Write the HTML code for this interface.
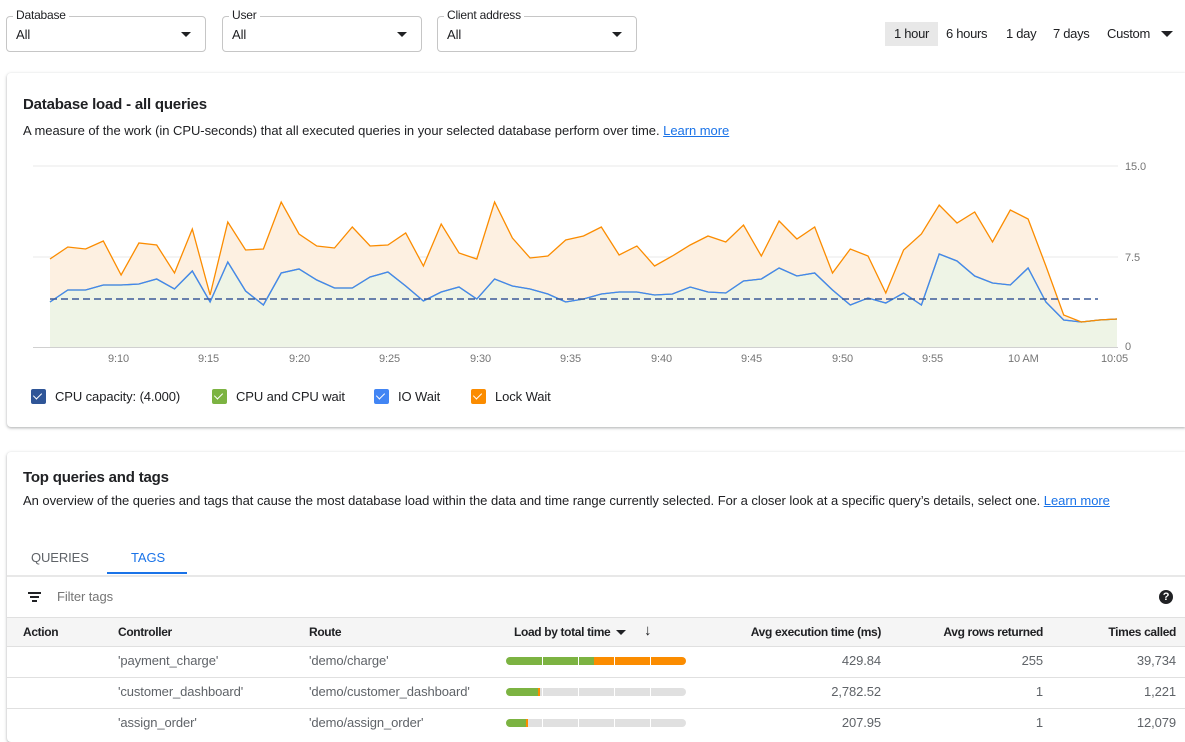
<!DOCTYPE html>
<html><head><meta charset="utf-8"><style>
*{box-sizing:border-box;margin:0;padding:0}
body{width:1185px;height:732px;overflow:hidden;background:#fff;font-family:"Liberation Sans",Arial,sans-serif;color:#202124;position:relative;letter-spacing:-0.1px}
.abs{position:absolute}
.sel{position:absolute;top:16px;height:36px;width:200px;border:1px solid #c6c6c6;border-radius:4px}
.sel .lb{position:absolute;top:-9px;left:6px;background:#fff;padding:0 3px;font-size:12px;color:#202124;letter-spacing:-0.2px}
.sel .v{position:absolute;left:9px;top:10px;font-size:13px}
.sel .ar{position:absolute;right:14px;top:15px;width:0;height:0;border-left:5px solid transparent;border-right:5px solid transparent;border-top:5px solid #202124}
.tb{position:absolute;top:22px;height:24px;font-size:13px;line-height:24px;color:#202124;letter-spacing:-0.3px}
.card{position:absolute;left:7px;right:0;background:#fff;box-shadow:0 1px 2px rgba(60,64,67,.3),0 1px 3px 1px rgba(60,64,67,.1);border-radius:4px 0 0 4px}
h2{font-size:15px;font-weight:bold;position:absolute;letter-spacing:-0.2px}
.p{font-size:13px;position:absolute;white-space:nowrap;letter-spacing:-0.04px}
a{color:#1a73e8;text-decoration:underline}
.lg{position:absolute;top:389px;font-size:13px;display:flex;align-items:center}
.lg i{display:inline-block;width:15px;height:15px;border-radius:2px;margin-right:9px;position:relative}
.lg i:after{content:"";position:absolute;left:4px;top:2px;width:4px;height:7px;border:solid #fff;border-width:0 1.5px 1.5px 0;transform:rotate(45deg)}
.ax{position:absolute;top:353px;font-size:11px;color:#757575}
.th{position:absolute;font-size:12px;font-weight:bold;color:#202124;top:625px;letter-spacing:-0.35px}
.td{position:absolute;font-size:13px;color:#5f6368}
.bar{position:absolute;left:506px;width:180px;height:8px;border-radius:4px;overflow:hidden;background:#e0e0e0}
.bar span{position:absolute;top:0;bottom:0;width:1px;background:#fff}
.hr{position:absolute;left:7px;right:0;height:1px;background:#e0e0e0}
</style></head><body>
<div class="sel" style="left:6px"><span class="lb">Database</span><span class="v">All</span><span class="ar"></span></div>
<div class="sel" style="left:222px"><span class="lb">User</span><span class="v">All</span><span class="ar"></span></div>
<div class="sel" style="left:437px"><span class="lb">Client address</span><span class="v">All</span><span class="ar"></span></div>
<div class="tb" style="left:885px;width:53px;background:#e8e8e8;text-align:center">1 hour</div>
<div class="tb" style="left:946px">6 hours</div>
<div class="tb" style="left:1006px">1 day</div>
<div class="tb" style="left:1053px">7 days</div>
<div class="tb" style="left:1107px">Custom</div>
<div class="abs" style="left:1161px;top:31px;border-left:6px solid transparent;border-right:6px solid transparent;border-top:6px solid #202124"></div>

<div class="card" style="top:73px;height:354px"></div>
<h2 style="left:23px;top:96px">Database load - all queries</h2>
<div class="p" style="left:23px;top:123px">A measure of the work (in CPU-seconds) that all executed queries in your selected database perform over time. <a>Learn more</a></div>
<svg class="abs" style="left:0;top:0" width="1185" height="380" id="ch">
<line x1="33" y1="166" x2="1118" y2="166" stroke="#e8e8e8"/>
<line x1="33" y1="257" x2="1118" y2="257" stroke="#e8e8e8"/>
<g id="g"></g>
<line x1="33" y1="347.5" x2="1118" y2="347.5" stroke="#d0d0d0"/>
<line x1="50" y1="299" x2="1098" y2="299" stroke="#3c5a99" stroke-width="1.5" stroke-dasharray="7,4"/>
<text x="1125" y="170" font-size="11" fill="#757575" font-family="Liberation Sans">15.0</text>
<text x="1125" y="261" font-size="11" fill="#757575" font-family="Liberation Sans">7.5</text>
<text x="1125" y="350" font-size="11" fill="#757575" font-family="Liberation Sans">0</text>
</svg>
<script>
var o=[259,247,249,241,275,243,245,273,229,295,222,250,249,202,234,246,248,227,246,245,233,266,224,253,259,202,238,258,256,240,236,227,255,246,266,256,245,236,242,225,256,221,239,227,273,249,256,293,250,234,205,223,212,242,210,219,266,315,322,320,319];
var b=[302,290,290,285,285,284,279,289,271,302,262,291,305,273,269,280,288,288,277,272,286,301,292,287,299,279,286,289,294,302,299,294,292,292,295,294,287,292,293,281,279,268,276,273,290,305,298,303,293,305,254,261,276,283,285,268,302,320,322,320,319];
function X(i){return (50+i*1067/60).toFixed(1)}
var po=o.map(function(y,i){return X(i)+","+y}),pb=b.map(function(y,i){return X(i)+","+y});
var rb=pb.slice().reverse();
var h='<polygon fill="#fdf0e1" points="'+po.join(" ")+" "+rb.join(" ")+'"/>';
h+='<polygon fill="#eef4e6" points="'+pb.join(" ")+" 1117,347 50,347"+'"/>';
h+='<polyline fill="none" stroke="#7cb342" stroke-width="1.3" points="'+pb.join(" ")+'"/>';
h+='<polyline fill="none" stroke="#4285f4" stroke-width="1.3" points="'+pb.join(" ")+'"/>';
h+='<polyline fill="none" stroke="#fb8c00" stroke-width="1.3" points="'+po.join(" ")+'"/>';
document.getElementById("g").innerHTML=h;
</script>
<div class="ax" style="left:108px">9:10</div><div class="ax" style="left:198px">9:15</div><div class="ax" style="left:289px">9:20</div><div class="ax" style="left:379px">9:25</div><div class="ax" style="left:470px">9:30</div><div class="ax" style="left:560px">9:35</div><div class="ax" style="left:651px">9:40</div><div class="ax" style="left:741px">9:45</div><div class="ax" style="left:832px">9:50</div><div class="ax" style="left:922px">9:55</div><div class="ax" style="left:1008px">10 AM</div><div class="ax" style="left:1101px">10:05</div>
<div class="lg" style="left:31px"><i style="background:#2f5597"></i>CPU capacity: (4.000)</div>
<div class="lg" style="left:212px"><i style="background:#7cb342"></i>CPU and CPU wait</div>
<div class="lg" style="left:374px"><i style="background:#4285f4"></i>IO Wait</div>
<div class="lg" style="left:471px"><i style="background:#fb8c00"></i>Lock Wait</div>

<div class="card" style="top:452px;height:290px"></div>
<h2 style="left:23px;top:469px">Top queries and tags</h2>
<div class="p" style="left:23px;top:493px">An overview of the queries and tags that cause the most database load within the data and time range currently selected. For a closer look at a specific query’s details, select one. <a>Learn more</a></div>
<div class="abs" style="left:31px;top:550px;font-size:13px;color:#5f6368">QUERIES</div>
<div class="abs" style="left:131px;top:550px;font-size:13px;color:#1a73e8">TAGS</div>
<div class="abs" style="left:107px;top:572px;width:80px;height:2px;background:#1a73e8"></div>
<div class="hr" style="top:575px;height:2px;background:#e8e8e8"></div>
<div class="abs" style="left:28px;top:592px;width:13px;height:2px;background:#202124"></div>
<div class="abs" style="left:30px;top:596px;width:9px;height:2px;background:#202124"></div>
<div class="abs" style="left:32px;top:600px;width:5px;height:2px;background:#202124"></div>
<div class="abs" style="left:57px;top:589px;font-size:13px;color:#757575">Filter tags</div>
<div class="abs" style="left:1159px;top:590px;width:14px;height:14px;border-radius:50%;background:#202124;color:#fff;font-size:11px;font-weight:bold;text-align:center;line-height:14px">?</div>
<div class="abs" style="left:7px;right:0;top:617px;height:30px;background:#f5f5f5;border-top:1px solid #e0e0e0;border-bottom:1px solid #e0e0e0"></div>
<div class="th" style="left:23px">Action</div>
<div class="th" style="left:118px">Controller</div>
<div class="th" style="left:309px">Route</div>
<div class="th" style="left:514px">Load by total time</div>
<div class="abs" style="left:616px;top:630px;border-left:5px solid transparent;border-right:5px solid transparent;border-top:5px solid #202124"></div>
<div class="abs" style="left:644px;top:622px;font-size:15px;font-weight:bold">↓</div>
<div class="th" style="right:304px">Avg execution time (ms)</div>
<div class="th" style="right:142px">Avg rows returned</div>
<div class="th" style="right:9px">Times called</div>

<div class="td" style="left:118px;top:653px">'payment_charge'</div>
<div class="td" style="left:309px;top:653px">'demo/charge'</div>
<div class="bar" style="top:657px;background:linear-gradient(90deg,#7cb342 0 49%,#fb8c00 49%)"><span style="left:36px"></span><span style="left:72px"></span><span style="left:108px"></span><span style="left:144px"></span></div>
<div class="td" style="right:304px;top:653px">429.84</div>
<div class="td" style="right:142px;top:653px">255</div>
<div class="td" style="right:9px;top:653px">39,734</div>
<div class="hr" style="top:677px"></div>
<div class="td" style="left:118px;top:684px">'customer_dashboard'</div>
<div class="td" style="left:309px;top:684px">'demo/customer_dashboard'</div>
<div class="bar" style="top:688px;background:linear-gradient(90deg,#7cb342 0 32px,#fb8c00 32px 34px,#e0e0e0 34px)"><span style="left:36px"></span><span style="left:72px"></span><span style="left:108px"></span><span style="left:144px"></span></div>
<div class="td" style="right:304px;top:684px">2,782.52</div>
<div class="td" style="right:142px;top:684px">1</div>
<div class="td" style="right:9px;top:684px">1,221</div>
<div class="hr" style="top:708px"></div>
<div class="td" style="left:118px;top:715px">'assign_order'</div>
<div class="td" style="left:309px;top:715px">'demo/assign_order'</div>
<div class="bar" style="top:719px;background:linear-gradient(90deg,#7cb342 0 20px,#fb8c00 20px 22px,#e0e0e0 22px)"><span style="left:36px"></span><span style="left:72px"></span><span style="left:108px"></span><span style="left:144px"></span></div>
<div class="td" style="right:304px;top:715px">207.95</div>
<div class="td" style="right:142px;top:715px">1</div>
<div class="td" style="right:9px;top:715px">12,079</div>
</body></html>
